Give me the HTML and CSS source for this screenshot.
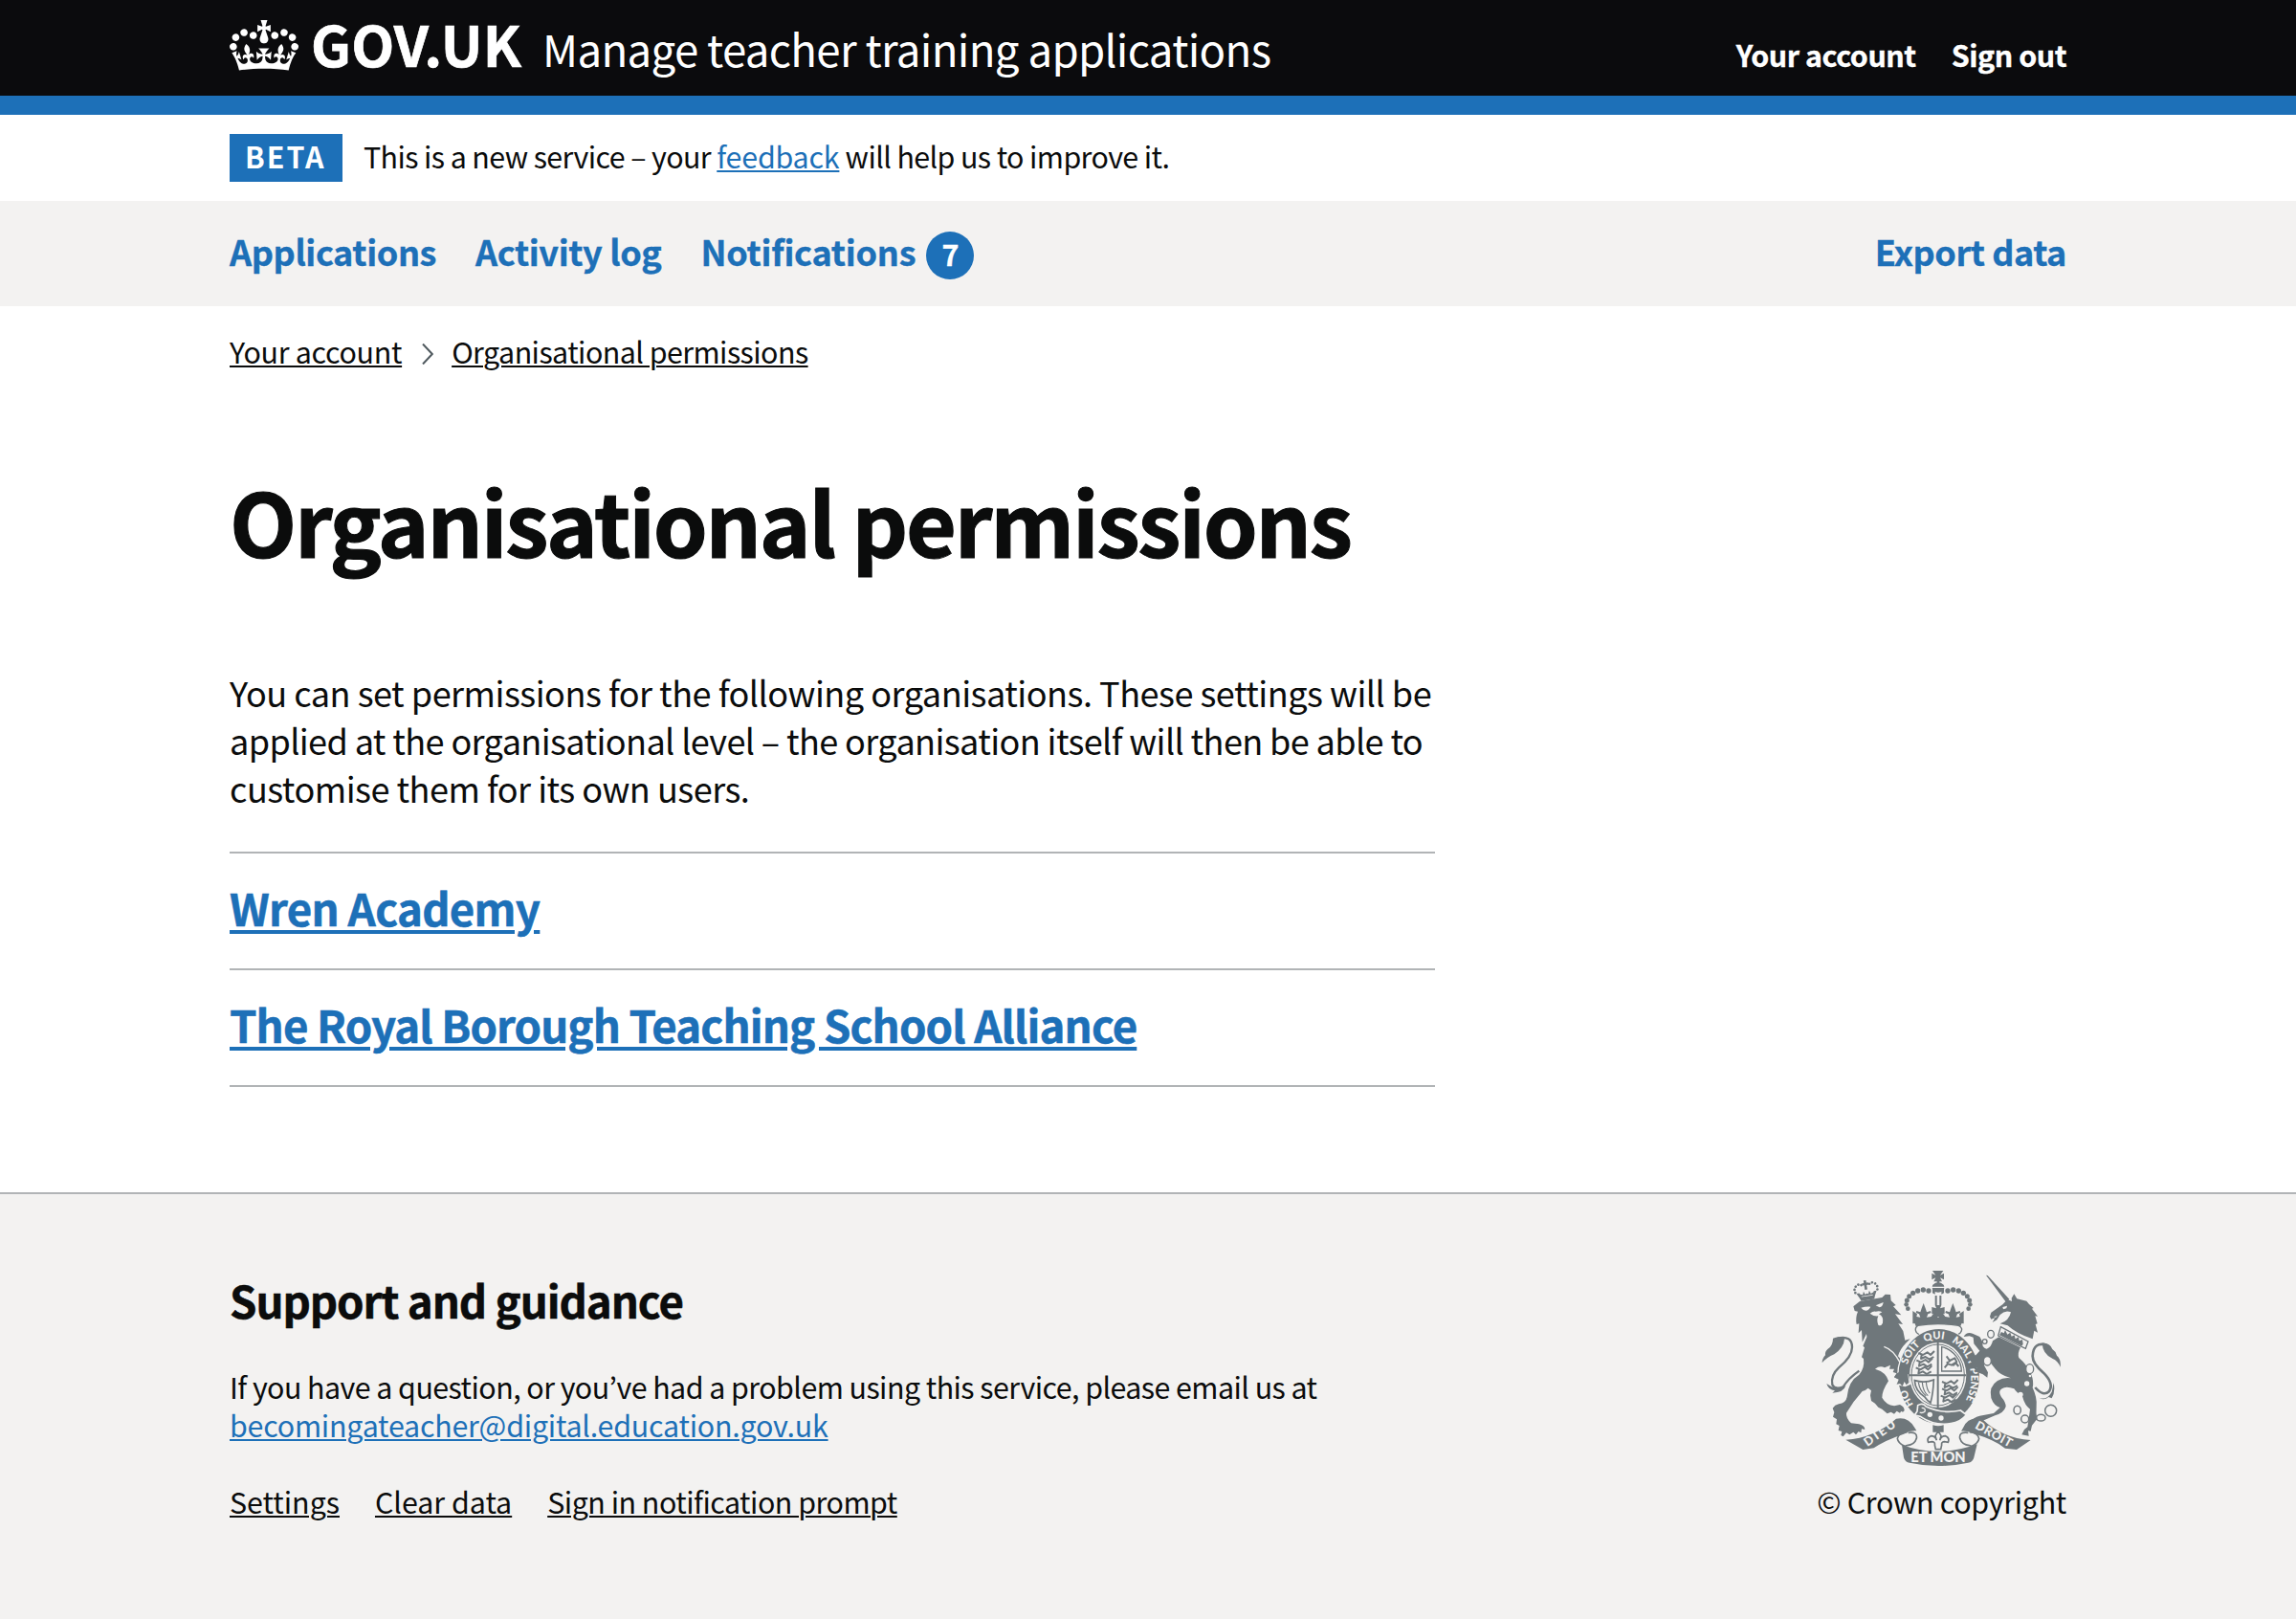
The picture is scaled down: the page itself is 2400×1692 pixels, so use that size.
FILE: index.html
```html
<!DOCTYPE html>
<html lang="en">
<head>
<meta charset="utf-8">
<title>Organisational permissions - Manage teacher training applications - GOV.UK</title>
<link rel="stylesheet" href="styles.css">
</head>
<body>
<header class="header">
<div class="container header__inner">
<svg class="header__crown" viewBox="0 0 132 97" aria-hidden="true"><path d="M25 30.2c3.5 1.5 7.7-.2 9.1-3.7 1.5-3.6-.2-7.8-3.9-9.2-3.6-1.4-7.6.3-9.1 3.9-1.4 3.5.3 7.5 3.9 9zM9 39.5c3.6 1.5 7.8-.2 9.2-3.7 1.5-3.6-.2-7.8-3.9-9.1-3.6-1.5-7.6.2-9.1 3.8-1.4 3.5.3 7.5 3.8 9zM4.4 57.2c3.5 1.5 7.7-.2 9.1-3.8 1.5-3.6-.2-7.7-3.9-9.1-3.5-1.5-7.6.3-9.1 3.8-1.4 3.5.3 7.6 3.9 9.1zm38.3-21.4c3.5 1.5 7.7-.2 9.1-3.8 1.5-3.6-.2-7.7-3.9-9.1-3.6-1.5-7.6.3-9.1 3.8-1.3 3.6.4 7.7 3.9 9.1zm64.4-5.6c-3.6 1.5-7.8-.2-9.1-3.7-1.5-3.6.2-7.8 3.8-9.2 3.6-1.4 7.7.3 9.2 3.9 1.3 3.5-.4 7.5-3.9 9zm15.9 9.3c-3.6 1.5-7.7-.2-9.1-3.7-1.5-3.6.2-7.8 3.7-9.1 3.6-1.5 7.7.2 9.2 3.8 1.5 3.5-.3 7.5-3.8 9zm4.7 17.7c-3.6 1.5-7.8-.2-9.2-3.8-1.5-3.6.2-7.7 3.9-9.1 3.6-1.5 7.7.3 9.2 3.8 1.3 3.5-.4 7.6-3.9 9.1zM89.3 35.8c-3.6 1.5-7.8-.2-9.2-3.8-1.4-3.6.2-7.7 3.9-9.1 3.6-1.5 7.7.3 9.2 3.8 1.4 3.6-.3 7.7-3.9 9.1zM69.7 17.7l8.9 4.7V9.3l-8.9 2.8c-.2-.3-.5-.6-.9-.9L72.4 0H59.6l3.5 11.2c-.3.3-.6.5-.9.9l-8.8-2.8v13.1l8.8-4.7c.3.3.6.7.9.9l-5 15.4v.1c-.2.8-.4 1.6-.4 2.4 0 4.1 3.1 7.5 7 8.1h.2c.3 0 .7.1 1 .1.4 0 .7 0 1-.1h.2c4-.6 7.1-4.1 7.1-8.1 0-.8-.1-1.7-.4-2.4V34l-5.1-15.4c.4-.2.7-.6 1-.9zM66 92.8c16.9 0 32.8 1.1 47.1 3.2 4-16.9 8.9-26.7 14-33.5l-9.6-3.4c1 4.9 1.1 7.2 0 10.2-1.5-1.4-3-4.3-4.2-8.7L108.6 76c2.8-2 5-3.2 7.5-3.3-4.4 9.4-10 11.9-13.6 11.2-4.3-.8-6.3-4.6-5.6-7.9 1-4.7 5.7-5.9 8-.5 4.3-8.7-3-11.4-7.6-8.8 7.1-7.2 7.9-13.5 2.1-21.1-8 6.1-8.1 12.3-4.5 20.8-4.7-5.4-12.1-2.5-9.5 6.2 3.4-5.2 7.9-2 7.2 3.1-.6 4.3-6.4 7.8-13.5 7.2-10.3-.9-10.9-8-11.2-13.8 2.5-.5 7.1 1.8 11 7.3L80.2 60c-4.1 4.4-8 5.3-12.3 5.4 1.4-4.4 8-11.6 8-11.6H55.5s6.4 7.2 7.9 11.6c-4.2-.1-8-1-12.3-5.4l1.4 16.4c3.9-5.5 8.5-7.7 10.9-7.3-.3 5.8-.9 12.8-11.1 13.8-7.2.6-12.9-2.9-13.5-7.2-.7-5 3.8-8.3 7.1-3.1 2.7-8.7-4.6-11.6-9.4-6.2 3.7-8.5 3.6-14.7-4.6-20.8-5.8 7.6-5 13.9 2.2 21.1-4.7-2.6-11.9.1-7.7 8.8 2.3-5.5 7.1-4.2 8.1.5.7 3.3-1.3 7.1-5.7 7.9-3.5.7-9-1.8-13.5-11.2 2.5.1 4.7 1.3 7.5 3.3l-4.7-15.4c-1.2 4.4-2.7 7.2-4.3 8.7-1.1-3-.9-5.3 0-10.2l-9.5 3.4c5 6.9 9.9 16.7 14 33.5 14.8-2.1 30.8-3.2 47.7-3.2z"/></svg>
<a class="header__logo">GOV.UK</a>
<a class="header__service">Manage teacher training applications</a>
<nav class="header__nav"><a>Your account</a><a>Sign out</a></nav>
</div>
</header>
<div class="container phase">
<strong class="phase__tag">BETA</strong>
<span class="phase__text">This is a new service – your <a class="link phase__link">feedback</a> will help us to improve it.</span>
</div>
<nav class="primary">
<div class="container primary__inner">
<a>Applications</a>
<a>Activity log</a>
<a class="primary__notifications">Notifications <span class="badge">7</span></a>
<a class="primary__export">Export data</a>
</div>
</nav>
<div class="container breadcrumbs">
<a>Your account</a>
<svg class="breadcrumbs__arrow" viewBox="0 0 12 22" aria-hidden="true"><path d="M1 .5L10.800 11 1 21.500"/></svg>
<a class="breadcrumbs__current">Organisational permissions</a>
</div>
<main class="container main">
<h1>Organisational permissions</h1>
<p class="body">You can set permissions for the following organisations. These settings will be<br><span class="body__tight">applied at the organisational level – the organisation itself will then be able to</span><br>customise them for its own users.</p>
<ul class="orgs">
<li><h2><a class="link org-first">Wren Academy</a></h2></li>
<li><h2><a class="link">The Royal Borough Teaching School Alliance</a></h2></li>
</ul>
</main>
<footer class="footer">
<div class="container footer__inner">
<div class="footer__support">
<h2>Support and guidance</h2>
<p>If you have a question, or you’ve had a problem using this service, please email us at<br><a class="link footer__email">becomingateacher@digital.education.gov.uk</a></p>
<div class="footer__links"><a>Settings</a><a>Clear data</a><a class="footer__prompt">Sign in notification prompt</a></div>
</div>
<div class="footer__copyright">
<svg class="crest" viewBox="72 54 750 612" role="img" aria-label="Royal coat of arms">
<defs>
<g id="arch">
<circle cx="408" cy="117" r="8"/><circle cx="391" cy="114" r="8"/><circle cx="374" cy="117" r="8"/><circle cx="359" cy="124" r="8"/><circle cx="347" cy="134" r="7.5"/><circle cx="340" cy="147" r="7.5"/><circle cx="338" cy="160" r="7"/><circle cx="343" cy="173" r="7"/>
<path d="M420 107l8 5v16l-8-4zM428 132h6v30h-6zM358 180l14 10-2 8 12 2-4-10-10-4 2-6 12 4 4-12 6-16 6 16 4 12 12-4 2 6-10 4-4 10 14-2 6-8-2-14 16 0v36l-78 8z"/>
</g>
<path id="motto" d="M372 487A103 124 0 1 1 504 487"/>
</defs>
<path d="M172 166l20-16 70-12 10-10 16 1 2 19 15 14-8 4 25 27-19-3 24 32-14-2 15 23q4 19 6 29l16-4-12 12q-20 20-26 42 18 18 31 56l3 27-8 7-6-10-6 14-8-8-10 2 6-15-14-7 8-12-12-4 4-10-15 0 3-12-18 8q-15-8-30 4 35 10 42 38-20 30-20 52 13 23 38 26l18-4q14 6 14 18-4 8-10 2l-4 6-10-6-8 9-10-6-12 5-16-14-12-6-10-12-12-8-3-17 3-15-10-8q-8 8-18 10-30 33-50 68-2 15 15 32l25 3q18 5 18 17l-10-2-2 12-8-4-8 10-8-8-12 8-10-6-10 12-7-4 3-12-11-3 3-15-10-5 2-15-12-8 4-14-5-13 8-9 11-4q22-2 26-22 4-50 38-70 18-20 14-50l-6-5 9-30-5-5 12-28-1-10-13 26-2-38-10 10 2-30-8 2q-4-22 4-40l-10-2z"/>
<path d="M74 343q0-14 10-24-2-12 8-20 16-10 16-33 20-10 36 2-2 28-32 48-24 10-38 27zM88 408l16 10q14 6 30 2l14-6q-6 22-42 23l8-7q-20-2-26-22z"/>
<path d="M122 266q46-10 46 28 0 30-42 64-26 24-20 54 8 16 34 6 16-26 50-50" fill="none" stroke="currentColor" stroke-width="7"/>
<g transform="rotate(-9 213 120)"><path d="M190 134h46l-2 12h-42zM209 84h8v8h6v7h-6v14h-8v-14h-6v-7h6zM190 124l10 4 4-10 4 10 5-3 5 3 4-10 4 10 10-4-2 8h-42z"/><circle cx="178" cy="118" r="4"/><circle cx="177" cy="108" r="4"/><circle cx="182" cy="99" r="4"/><circle cx="191" cy="94" r="4"/><circle cx="200" cy="97" r="4"/><circle cx="226" cy="97" r="4"/><circle cx="235" cy="94" r="4"/><circle cx="244" cy="99" r="4"/><circle cx="249" cy="108" r="4"/><circle cx="248" cy="118" r="4"/><path d="M181 121l11 22 5-4-7-18zM245 121l-11 22-5-4 7-18z"/></g>
<path class="paper" d="M196 170q14-4 30-3-6 12-15 12-9-1-15-9zM242 163l24-10q-2 14-12 16zM224 188q10-8 18-6 12-4 20 2l-10 6q16 8 12 28-6 12-14 6-6-14 0-28-14 2-26-8z"/>
<path d="M268 292q30 10 50 50" fill="none" class="paper-line" stroke-width="4"/>
<use href="#arch"/><use href="#arch" transform="matrix(-1 0 0 1 876 0)"/>
<path d="M420 54h34l-10 14 12-6v20l-12-6 6 12h-26l6-12-12 6V62l12 6zM434 88h8v8h-8zM421 98q17-14 34 0l2 6h-38zM419 108h38q-2 14-19 14-17 0-19-14zM418 168l14 4-4-10h20l-4 10 14-4v22l-14-4 4 12h-20l4-12-14 4zM360 208q78-16 156 0l-8 20q-70-12-140 0z"/>
<path d="M374 226q64-10 128 0 16 8 6 22l-10 8q-60-12-118 0l-10-8q-8-14 4-22z" class="paper outline" stroke-width="4"/>
<ellipse cx="440" cy="385" rx="131" ry="150" class="paper"/>
<ellipse cx="440" cy="385" rx="127" ry="148"/>
<ellipse cx="437" cy="381" rx="89" ry="102" class="paper"/>
<ellipse cx="437" cy="381" rx="83" ry="96" fill="none" stroke="currentColor" stroke-width="3"/>
<path d="M437 279v204M348 382h178" stroke="currentColor" stroke-width="6"/>
<path d="M449 293v76h62q0-24-16-46-18-24-46-30z" fill="none" stroke="currentColor" stroke-width="4"/>
<g fill="none" stroke="currentColor" stroke-width="6" stroke-linejoin="round"><path id="beast" d="M376 312l14 6 14-8 10 8 12-12M386 318l-2 12 14-6 12 8 14-8"/><use href="#beast" transform="translate(-6 23)"/><use href="#beast" transform="translate(-8 46)"/><use href="#beast" transform="translate(74 90)"/><use href="#beast" transform="translate(74 112)"/><use href="#beast" transform="translate(70 134)"/><path d="M458 358l10-12 12 4 12-8 10 12M464 322l10 14 16-8 6 12-12 12M476 336l-12 8"/></g>
<path d="M364 398q32 10 60-2-2 44-10 72-12-8-18-18-30-18-32-52z" fill="none" stroke="currentColor" stroke-width="5"/><path d="M376 404q4 28 24 42M388 404q2 28 18 42M400 402q2 26 12 36" fill="none" stroke="currentColor" stroke-width="3.5"/>
<path class="paper" d="M308 384l36-6 8 32-18 8-26-6z"/>
<path d="M343 378l3 27-8 7-6-10-6 14-8-8-10 2 6-15-14-7 8-12 20-10z"/>
<path d="M374 476q16-10 26 4 50 24 108 12l18 14q-18 22-48 27-52 8-96-22l-18-4 8-12z" class="paper-line" stroke-width="5"/>
<path d="M386 484q14 0 10 12-8 6-16 2" fill="none" class="paper-line" stroke-width="4"/>
<circle cx="412" cy="505" r="8" class="paper"/><circle cx="447" cy="516" r="8" class="paper"/>
<g class="crest__motto"><text><textPath href="#motto" startOffset="18">HO</textPath></text><text><textPath href="#motto" startOffset="148">SOIT</textPath></text><text><textPath href="#motto" startOffset="240">QUI</textPath></text><text><textPath href="#motto" startOffset="326">MAL</textPath></text><text><textPath href="#motto" startOffset="400">Y</textPath></text><text><textPath href="#motto" startOffset="430">PENSE</textPath></text></g>
<path d="M588 68l5 1 68 74-10 10zM600 198l4-13 36-25 15-16 14 6-1-10 8-13 9 15 30 7 8 10 14 12-5 2 18 24-8-1 7 24-6 2 7 26-11-6-5 26q-50-16-78-42l-24-6q28-8 34-36-18-8-34 8l-10 16-14 8 8-14-12 4z"/>
<path class="paper" d="M640 168l14-4-2 8-10 3zM612 198l12-2-6 5z"/>
<path d="M634 230l86 46-8 22-86-40z" class="paper outline" stroke-width="4"/><path d="M636 246l8 4 4-10 7 14 9-6 4 12 9-4 3 12 10-6 2 12 10-4 2 14-4 6-70-34z"/>
<path d="M628 262l68 33q-10 18-5 32 24 20 38 50 10 24 5 44 14 30 12 56-2 24 2 42l-16 20-4 18-8-1 2 16-22-4 8-16 10-8 4-26 4-30q-16-10-24-40-20-14-26-24-26-10-38 0-14 8-2 26 14 16 14 30-6 20-34 28l-38 16-40 7q10-18 30-22l44-8 20-18q-20-6-28-30-8-36 20-54 20-12 42-8-34-10-48-28l-16-20-20-4 0 12 12 22-2 16-14-10-20-8-8-12 12 0-22-20-4-18 20-2 12-14-18-22-2-20-12-4-18 2q8-16 28-10l22 10 8 14 2 16q6 8 12 8 14-4 19-25z"/>
<g class="paper outline" stroke-width="4"><ellipse cx="603" cy="253" rx="10" ry="12"/><circle cx="584" cy="276" r="7"/><ellipse cx="592" cy="337" rx="12" ry="14"/><ellipse cx="725" cy="362" rx="12" ry="15"/></g>
<g class="paper"><circle cx="716" cy="408" r="8"/><circle cx="696" cy="442" r="8"/><circle cx="726" cy="384" r="4"/></g>
<g fill="none" stroke="currentColor" stroke-width="4.5"><ellipse cx="686" cy="491" rx="11" ry="13"/><circle cx="710" cy="519" r="12"/><ellipse cx="760" cy="515" rx="14" ry="10"/><circle cx="791" cy="493" r="18"/></g>
<path d="M780 288q-44-14-46 34 0 24 34 52 34 34 18 58-18 18-44-12" fill="none" stroke="currentColor" stroke-width="8"/>
<path d="M764 280q26 2 32 20 10 6 14 20 14 12 11 36-8-20-24-26-32-14-33-50zM754 452q24 10 40-18l6-28q6 28-6 48l-10-4q-14 12-30 2z"/>
<path d="M148 584q90-6 158-66 38-8 58 28l6 10q-20-2-40 10-60 20-94 44l-34 5zM728 585q-90-6-152-66-44-10-60 28l-6 10q20-2 40 8 66 20 98 46l36 4z"/>
<path d="M340 560q-26 2-30 20 2 14 22 24M536 560q26 2 30 20-2 14-22 24" fill="none" stroke="currentColor" stroke-width="5"/>
<path d="M344 562q30-4 26 18-6 20-30 22l-12 4M532 562q-30-4-26 18 6 20 30 22l12 4" fill="none" stroke="currentColor" stroke-width="5"/>
<path d="M324 600q114 42 236-2l-10 42q-4 14-18 16-94 20-184 0-14-2-18-16zM421 538q17 6 34 0v22l-34 0z"/>
<path d="M438 556l9 16-4 14q4-14 18-14 14 6 8 20l-12-2q-10 2-8 10l-3 14h-16l-3-14q2-8-8-10l-12 2q-6-14 8-20 14 0 18 14l-4-14z" class="paper outline" stroke-width="5"/>
<g class="crest__ribbon"><text transform="translate(216 606) rotate(-35)" textLength="112">DIEU</text><text class="crest__ribbon-mid" x="352" y="655" textLength="172">ET MON</text><text transform="translate(551 547) rotate(29)" textLength="126">DROIT</text></g>
</svg>
<span>© Crown copyright</span>
</div>
</div>
</footer>
</body>
</html>
```
FILE: styles.css
```css
* { box-sizing: border-box; }
body {
  margin: 0;
  min-height: 1692px;
  display: flex;
  flex-direction: column;
  background: #fff;
  color: #0b0c0c;
  font: 30.4px/40px "Noto Sans CJK KR", "Noto Sans", sans-serif;
  letter-spacing: -.53px;
}
h1, h2, p, ul { margin: 0; padding: 0; }
h1, h2, .header__logo, .primary, .header__nav { -webkit-text-stroke: .012em currentColor; }
.container { width: 1920px; margin: 0 auto; }
.link {
  color: #1d70b8;
  text-decoration: underline 2px;
  text-underline-offset: 2px;
}

.header { height: 120px; background: #0b0b0d; border-bottom: 20px solid #1d70b8; color: #fff; }
.header__inner { display: flex; align-items: baseline; padding-top: 15px; white-space: nowrap; }
.header__crown { width: 72px; height: 53px; margin-top: 6px; align-self: flex-start; fill: #fff; }
.header__logo { margin-left: 13px; font-size: 58.5px; font-weight: 700; line-height: 60px; letter-spacing: .2px; }
.header__service { margin-left: 22px; font-size: 45.6px; line-height: 60px; letter-spacing: -.67px; }
.header__nav { display: flex; gap: 37px; margin-left: auto; font-weight: 700; letter-spacing: -.45px; }

.phase { display: flex; align-items: flex-start; height: 90px; padding-top: 20px; line-height: 47px; }
.phase__tag {
  width: 118px;
  height: 50px;
  padding-left: 16px;
  background: #1d70b8;
  color: #fff;
  letter-spacing: 2px;
}
.phase__text { margin-left: 22px; letter-spacing: -.6px; }
.phase__link { letter-spacing: -.2px; }

.primary { height: 110px; background: #f3f2f1; color: #1d70b8; }
.primary__inner {
  display: flex;
  gap: 41px;
  padding-top: 27px;
  font-size: 36.1px;
  font-weight: 700;
  line-height: 51px;
  letter-spacing: -.4px;
}
.primary__notifications { display: flex; gap: 11px; letter-spacing: -.25px; }
.primary__export { margin-left: auto; letter-spacing: -.45px; }
.badge {
  width: 50px;
  height: 50px;
  margin-top: 5px;
  border-radius: 50%;
  background: #1d70b8;
  color: #fff;
  font-size: 30.4px;
  line-height: 47px;
  text-align: center;
}

.breadcrumbs { display: flex; padding-top: 27px; }
.breadcrumbs a, .footer__links a { text-decoration: underline 2px; text-underline-offset: 2px; }
.breadcrumbs a { letter-spacing: -.3px; }
.breadcrumbs .breadcrumbs__current { letter-spacing: -.55px; }
.breadcrumbs__arrow { width: 12px; height: 22px; margin: 12px 19px 0 21px; fill: none; stroke: #505a5f; stroke-width: 2; }

.main { padding-top: 106px; padding-bottom: 110px; }
h1 { font-size: 91.2px; line-height: 100px; letter-spacing: -2.22px; }
.body { margin: 105px 0 42px; font-size: 36.1px; line-height: 50px; letter-spacing: -.51px; }
.body__tight { letter-spacing: -.62px; }
.orgs { width: 1260px; list-style: none; border-bottom: 2px solid #b1b4b6; }
.orgs li { padding: 26px 0 34px; border-top: 2px solid #b1b4b6; }
h2 { font-size: 45.6px; line-height: 60px; letter-spacing: -.88px; }
h2 .link { text-decoration-thickness: 4px; text-underline-offset: 4px; }
h2 .org-first { letter-spacing: -.7px; }

.footer { flex: 1; border-top: 2px solid #b1b4b6; background: #f3f2f1; }
.footer__inner { display: flex; justify-content: space-between; padding-top: 80px; }
.footer h2 { margin-bottom: 41px; letter-spacing: -1.05px; }
.footer__support p { letter-spacing: -.55px; }
.footer__support .footer__email { letter-spacing: -.22px; }
.footer__links { display: flex; gap: 37px; margin-top: 40px; letter-spacing: -.02px; }
.footer__prompt { letter-spacing: -.5px; }
.footer__copyright { display: flex; flex-direction: column; align-items: flex-end; letter-spacing: -.3px; }

.crest { width: 250px; height: 204px; margin: 0 6px 17px 0; color: #6f777b; fill: currentColor; letter-spacing: 0; }
.paper { fill: #f3f2f1; }
.outline { stroke: currentColor; }
.paper-line { stroke: #f3f2f1; }
.crest__motto { font: 900 33px Lato, sans-serif; fill: #f3f2f1; }
.crest__ribbon { font: 900 38px Lato, sans-serif; fill: #f3f2f1; }
.crest__ribbon-mid { font-size: 44px; }
```
